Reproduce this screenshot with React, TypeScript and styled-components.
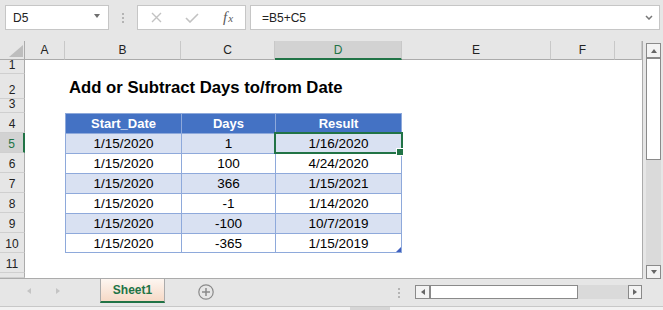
import React from "react";
import styled, { createGlobalStyle } from "styled-components";

const GlobalStyle = createGlobalStyle`
    html, body {
        margin: 0;
        padding: 0;
        background: #e6e6e6;
    }
    body {
        font-family: "Liberation Sans", Arial, sans-serif;
        color: #000;
    }
`;

const Window = styled.div`
    width: 663px;
    height: 310px;
    display: flex;
    flex-direction: column;
    overflow: hidden;
    background: #e6e6e6;
`;

/* ---------- formula bar ---------- */

const TopBar = styled.div`
    display: flex;
    align-items: stretch;
    height: 25px;
    padding: 5px 3px 0 5px;
`;

const NameBox = styled.div`
    width: 104px;
    box-sizing: border-box;
    border: 1px solid #c6c6c6;
    background: #fff;
    display: flex;
    align-items: center;
    justify-content: space-between;
    padding: 0 8px 0 7px;
    font-size: 12px;
    color: #222;
`;

const Caret = styled.span`
    width: 0;
    height: 0;
    border-left: 3.5px solid transparent;
    border-right: 3.5px solid transparent;
    border-top: 4px solid #6e6e6e;
    margin-bottom: 3px;
`;

const Grip = styled.div<{ $width: number }>`
    width: ${(p) => p.$width}px;
    display: flex;
    flex-direction: column;
    align-items: center;
    justify-content: center;
    gap: 2px;
`;

const GripDot = styled.span`
    width: 2px;
    height: 2px;
    background: #b4b4b4;
`;

const ButtonBox = styled.div`
    width: 109px;
    box-sizing: border-box;
    border: 1px solid #c6c6c6;
    background: #fff;
    display: flex;
    align-items: center;
    padding-left: 11px;
    gap: 22px;
`;

const IconSlot = styled.span`
    width: 14px;
    height: 14px;
    display: flex;
    align-items: center;
    justify-content: center;
`;

const FxLabel = styled.span`
    font-family: "Liberation Serif", "Times New Roman", serif;
    font-style: italic;
    font-size: 15px;
    color: #5a5a5a;
    display: flex;
    align-items: baseline;

    small {
        font-size: 11px;
        margin-left: 1px;
    }
`;

const FormulaBox = styled.div`
    flex: 1;
    margin-left: 4px;
    box-sizing: border-box;
    border: 1px solid #c6c6c6;
    background: #fff;
    display: flex;
    align-items: center;
    justify-content: space-between;
    padding: 0 6px 0 11px;
    font-size: 12px;
    color: #222;
`;

/* ---------- sheet ---------- */

const SheetArea = styled.div`
    display: flex;
    align-items: flex-start;
    margin-top: 11px;
    height: 238px;
`;

const Grid = styled.div`
    position: relative;
    display: grid;
    grid-template-columns: 25px 40px 116px 94px 127px 149px 64px 27px;
    grid-template-rows: 19px 14px 25px 14px repeat(8, 20px) 5px;
    width: 642px;
    background: #fff;
    border-right: 1px solid #ababab;
    border-bottom: 1px solid #ababab;
    overflow: hidden;
`;

const Corner = styled.div`
    grid-row: 1;
    grid-column: 1;
    box-sizing: border-box;
    background: #e6e6e6;
    border-right: 1px solid #ababab;
    border-bottom: 1px solid #ababab;
    display: flex;
    align-items: flex-end;
    justify-content: flex-end;
    padding: 0 1px 2px 0;
`;

const ColHead = styled.div<{ $col: number; $active?: boolean }>`
    grid-row: 1;
    grid-column: ${(p) => p.$col};
    box-sizing: border-box;
    display: flex;
    align-items: center;
    justify-content: center;
    background: ${(p) => (p.$active ? "#d2d2d2" : "#e6e6e6")};
    color: ${(p) => (p.$active ? "#217346" : "#222")};
    border-right: 1px solid #c8c8c8;
    border-bottom: ${(p) => (p.$active ? "2px solid #217346" : "1px solid #ababab")};
    font-size: 12px;
`;

const RowHead = styled.div<{ $row: number; $active?: boolean }>`
    grid-column: 1;
    grid-row: ${(p) => p.$row};
    box-sizing: border-box;
    display: flex;
    align-items: flex-end;
    justify-content: center;
    padding-bottom: 2px;
    line-height: 12px;
    background: ${(p) => (p.$active ? "#d2d2d2" : "#e6e6e6")};
    color: ${(p) => (p.$active ? "#217346" : "#222")};
    border-right: ${(p) => (p.$active ? "2px solid #217346" : "1px solid #ababab")};
    border-bottom: 1px solid #cfcfcf;
    font-size: 12px;
`;

const Title = styled.div`
    grid-column: 3 / 7;
    grid-row: 3;
    display: flex;
    align-items: flex-end;
    padding: 0 0 1px 4px;
    font-weight: bold;
    font-size: 16.7px;
    line-height: 20px;
    white-space: nowrap;
`;

type Tone = "head" | "band" | "plain";

const toneBg: Record<Tone, string> = {
    head: "#4472c4",
    band: "#d9e1f2",
    plain: "#ffffff",
};

const TableCell = styled.div<{
    $col: number;
    $row: number;
    $tone: Tone;
    $last?: boolean;
    $bottom?: boolean;
}>`
    grid-column: ${(p) => p.$col};
    grid-row: ${(p) => p.$row};
    position: relative;
    box-sizing: border-box;
    display: flex;
    align-items: center;
    justify-content: center;
    border-left: 1px solid #8ea9db;
    border-top: 1px solid #8ea9db;
    border-right: ${(p) => (p.$last ? "1px solid #8ea9db" : "none")};
    border-bottom: ${(p) => (p.$bottom ? "1px solid #8ea9db" : "none")};
    background: ${(p) => toneBg[p.$tone]};
    color: ${(p) => (p.$tone === "head" ? "#fff" : "#000")};
    font-weight: ${(p) => (p.$tone === "head" ? "bold" : "normal")};
    font-size: ${(p) => (p.$tone === "head" ? "13px" : "13.5px")};
    white-space: nowrap;
`;

const ResizeMark = styled.svg`
    position: absolute;
    right: 0;
    bottom: 0;
`;

const Selection = styled.div<{ $col: number; $row: number }>`
    grid-column: ${(p) => p.$col};
    grid-row: ${(p) => p.$row};
    margin: -1px;
    position: relative;
    z-index: 2;
    box-sizing: border-box;
    border: 2px solid #217346;
    pointer-events: none;
`;

const FillHandle = styled.span`
    position: absolute;
    right: -3px;
    bottom: -4px;
    width: 6px;
    height: 6px;
    background: #217346;
    border: 1px solid #fff;
`;

/* ---------- scroll bars ---------- */

const VScroll = styled.div`
    width: 15px;
    height: 236px;
    margin: 2px 0 0 3px;
    display: flex;
    flex-direction: column;
`;

const ScrollButton = styled.div<{ $size: number; $vertical?: boolean }>`
    box-sizing: border-box;
    ${(p) => (p.$vertical ? `height: ${p.$size}px;` : `width: ${p.$size}px;`)}
    flex-shrink: 0;
    border: 1px solid #8a8a8a;
    background: #f3f3f3;
    display: flex;
    align-items: center;
    justify-content: center;
`;

const Thumb = styled.div<{ $size: number; $vertical?: boolean }>`
    box-sizing: border-box;
    ${(p) => (p.$vertical ? `height: ${p.$size}px;` : `width: ${p.$size}px;`)}
    flex-shrink: 0;
    background: #fff;
    border: 1px solid #8a8a8a;
`;

const Track = styled.div`
    flex: 1;
    background: #dadada;
`;

const Arrow = styled.span<{ $dir: "up" | "down" | "left" | "right"; $color?: string }>`
    width: 0;
    height: 0;
    ${(p) => {
        const c = p.$color ?? "#666";
        switch (p.$dir) {
            case "up":
                return `border-left: 3.5px solid transparent; border-right: 3.5px solid transparent; border-bottom: 4px solid ${c};`;
            case "down":
                return `border-left: 3.5px solid transparent; border-right: 3.5px solid transparent; border-top: 4px solid ${c};`;
            case "left":
                return `border-top: 3.5px solid transparent; border-bottom: 3.5px solid transparent; border-right: 4px solid ${c};`;
            default:
                return `border-top: 3.5px solid transparent; border-bottom: 3.5px solid transparent; border-left: 4px solid ${c};`;
        }
    }}
`;

/* ---------- sheet tabs ---------- */

const TabBar = styled.div`
    display: flex;
    align-items: flex-start;
    height: 27px;
    padding-right: 21px;
`;

const TabNav = styled.div`
    width: 100px;
    height: 24px;
    box-sizing: border-box;
    display: flex;
    align-items: center;
    padding-left: 27px;
    gap: 25px;
`;

const SheetTab = styled.div`
    width: 65px;
    height: 24px;
    box-sizing: border-box;
    border-left: 1px solid #ababab;
    border-right: 1px solid #ababab;
    border-bottom: 2px solid #217346;
    background: linear-gradient(#fdf6f1, #f6d9c6);
    display: flex;
    align-items: center;
    justify-content: center;
    font-weight: bold;
    font-size: 12px;
    color: #217346;
`;

const AddSheet = styled.svg`
    margin: 5px 0 0 33px;
`;

const Spacer = styled.div`
    flex: 1;
`;

const HGrip = styled(Grip)`
    height: 12px;
    margin-top: 8px;
`;

const HScroll = styled.div`
    width: 227px;
    height: 14px;
    margin: 6px 0 0 15px;
    display: flex;
`;

const StatusStrip = styled.div`
    flex: 1;
    border-top: 1px solid #c8c8c8;
    background: #f2f2f2;
    padding-left: 350px;
`;

const StatusMark = styled.div`
    width: 40px;
    height: 100%;
    background: #d6d6d6;
`;

const columns = ["A", "B", "C", "D", "E", "F"];

const tableRows: [string, string, string][] = [
    ["1/15/2020", "1", "1/16/2020"],
    ["1/15/2020", "100", "4/24/2020"],
    ["1/15/2020", "366", "1/15/2021"],
    ["1/15/2020", "-1", "1/14/2020"],
    ["1/15/2020", "-100", "10/7/2019"],
    ["1/15/2020", "-365", "1/15/2019"],
];

// sheet row n sits on grid row n + 1 (grid row 1 holds the column letters)
const HEADER_ROW = 4;
const FIRST_COL = 3; // column B
const VISIBLE_ROWS = 11;

export default function App() {
    return (
        <Window>
            <GlobalStyle />
            <TopBar>
                <NameBox>
                    <span>D5</span>
                    <Caret />
                </NameBox>
                <Grip $width={28}>
                    <GripDot />
                    <GripDot />
                    <GripDot />
                </Grip>
                <ButtonBox>
                    <IconSlot>
                        <svg width="11" height="11" viewBox="0 0 11 11">
                            <path d="M1 1 L10 10 M10 1 L1 10" stroke="#c2c2c2" strokeWidth="1.4" fill="none" />
                        </svg>
                    </IconSlot>
                    <IconSlot>
                        <svg width="14" height="10" viewBox="0 0 14 10">
                            <path d="M1 5 L5 9 L13 1" stroke="#c2c2c2" strokeWidth="1.6" fill="none" />
                        </svg>
                    </IconSlot>
                    <IconSlot>
                        <FxLabel>
                            f<small>x</small>
                        </FxLabel>
                    </IconSlot>
                </ButtonBox>
                <FormulaBox>
                    <span>=B5+C5</span>
                    <svg width="8" height="5" viewBox="0 0 8 5">
                        <path d="M1 1 L4 4 L7 1" stroke="#777" strokeWidth="1.5" fill="none" />
                    </svg>
                </FormulaBox>
            </TopBar>

            <SheetArea>
                <Grid>
                    <Corner>
                        <svg width="14" height="12" viewBox="0 0 14 12">
                            <polygon points="14,0 14,12 0,12" fill="#bdbdbd" />
                        </svg>
                    </Corner>
                    {columns.map((c, i) => (
                        <ColHead key={c} $col={i + 2} $active={c === "D"}>
                            {c}
                        </ColHead>
                    ))}
                    <ColHead $col={8} />

                    {Array.from({ length: VISIBLE_ROWS }, (_, i) => (
                        <RowHead key={i} $row={i + 2} $active={i + 1 === 5}>
                            {i + 1}
                        </RowHead>
                    ))}
                    {/* row 12 only peeks in below row 11 */}
                    <RowHead $row={VISIBLE_ROWS + 2} />

                    <Title>Add or Subtract Days to/from Date</Title>

                    {["Start_Date", "Days", "Result"].map((h, i) => (
                        <TableCell
                            key={h}
                            $col={FIRST_COL + i}
                            $row={HEADER_ROW + 1}
                            $tone="head"
                            $last={i === 2}
                        >
                            {h}
                        </TableCell>
                    ))}

                    {tableRows.map((row, r) =>
                        row.map((value, c) => {
                            const isBottom = r === tableRows.length - 1;
                            const isLast = c === row.length - 1;
                            return (
                                <TableCell
                                    key={`${r}-${c}`}
                                    $col={FIRST_COL + c}
                                    $row={HEADER_ROW + 2 + r}
                                    $tone={r % 2 === 0 ? "band" : "plain"}
                                    $last={isLast}
                                    $bottom={isBottom}
                                >
                                    {value}
                                    {isBottom && isLast && (
                                        <ResizeMark width="5" height="5" viewBox="0 0 5 5">
                                            <polygon points="5,0 5,5 0,5" fill="#3f5fbf" />
                                        </ResizeMark>
                                    )}
                                </TableCell>
                            );
                        })
                    )}

                    <Selection $col={5} $row={6}>
                        <FillHandle />
                    </Selection>
                </Grid>

                <VScroll>
                    <ScrollButton $vertical $size={15}>
                        <Arrow $dir="up" />
                    </ScrollButton>
                    <Thumb $vertical $size={102} />
                    <Track />
                    <ScrollButton $vertical $size={14}>
                        <Arrow $dir="down" />
                    </ScrollButton>
                </VScroll>
            </SheetArea>

            <TabBar>
                <TabNav>
                    <Arrow $dir="left" $color="#c4c4c4" />
                    <Arrow $dir="right" $color="#c4c4c4" />
                </TabNav>
                <SheetTab>Sheet1</SheetTab>
                <AddSheet width="16" height="16" viewBox="0 0 16 16">
                    <circle cx="8" cy="8" r="7.2" stroke="#8a8a8a" strokeWidth="1.2" fill="none" />
                    <path d="M8 4 V12 M4 8 H12" stroke="#8a8a8a" strokeWidth="1.5" />
                </AddSheet>
                <Spacer />
                <HGrip $width={2}>
                    <GripDot />
                    <GripDot />
                    <GripDot />
                </HGrip>
                <HScroll>
                    <ScrollButton $size={15}>
                        <Arrow $dir="left" />
                    </ScrollButton>
                    <Thumb $size={148} />
                    <Track />
                    <ScrollButton $size={14}>
                        <Arrow $dir="right" />
                    </ScrollButton>
                </HScroll>
            </TabBar>

            <StatusStrip>
                <StatusMark />
            </StatusStrip>
        </Window>
    );
}
